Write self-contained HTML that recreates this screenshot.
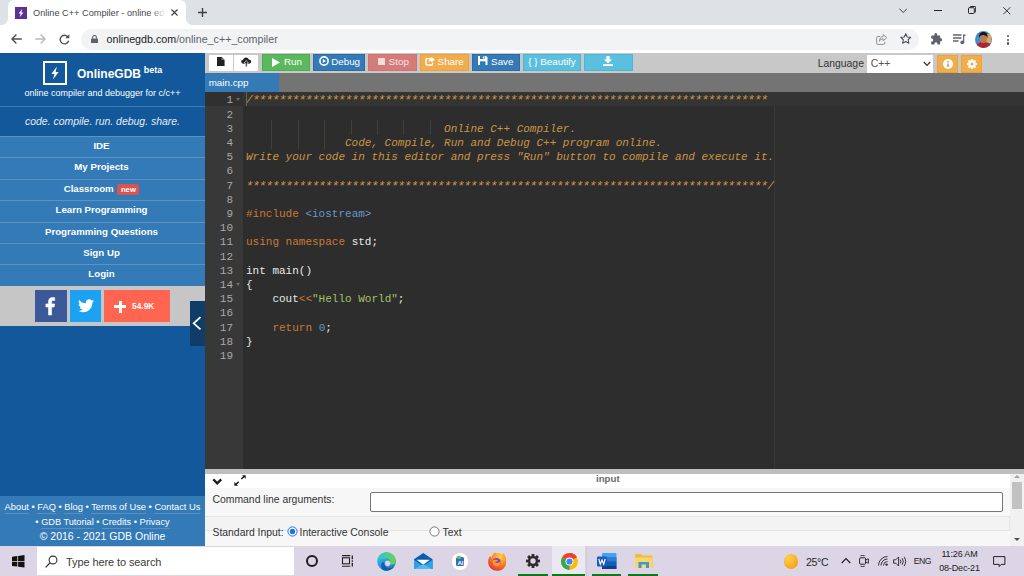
<!DOCTYPE html>
<html>
<head>
<meta charset="utf-8">
<title>Online C++ Compiler</title>
<style>
*{box-sizing:border-box;margin:0;padding:0}
html,body{width:1024px;height:576px;overflow:hidden;background:#fff;font-family:"Liberation Sans",sans-serif;}
.abs{position:absolute}
#root{position:relative;width:1024px;height:576px;overflow:hidden}
/* browser chrome */
#tabstrip{left:0;top:0;width:1024px;height:25px;background:#dee1e6}
#tab{left:7.500px;top:0;width:178.500px;height:25px;background:#fff;border-radius:6px 6px 0 0}
#tabtitle{left:33px;top:6.500px;font-size:9.200px;line-height:12px;color:#45494d;white-space:nowrap;width:133px;overflow:hidden}
#addr{left:0;top:25px;width:1024px;height:27.700px;background:#fff}
#pill{left:81px;top:28.500px;width:838px;height:21px;border-radius:10.500px;background:#f1f3f4}
#url{left:106.600px;top:32px;font-size:10.700px;line-height:14px;color:#5f6368;white-space:nowrap}
#url b{font-weight:normal;color:#202124}
/* sidebar */
#side{left:0;top:52.700px;width:205px;height:493.300px;background:#12589a}
.menu{left:0;width:205px;height:21.4px;background:#337ab7;border-top:1px solid #5a93c6;color:#fff;font-weight:bold;font-size:9.700px;text-align:center;line-height:18.600px;padding-right:2px}
/* toolbar */
#toolbar{left:205px;top:53px;width:819px;height:20.400px;background:#c8c8c8}
.btn{top:54px;height:17px;color:#fff;font-size:10.5px;line-height:17px;text-align:center;white-space:nowrap}
#tabs{left:205px;top:73.400px;width:819px;height:18.600px;background:#747474}
#ftab{left:205px;top:73.400px;width:74px;height:18.600px;background:#337ab7;color:#fff;font-size:9.800px;line-height:19px;padding-left:3.700px}
/* editor */
#editor{left:205px;top:92px;width:819px;height:377px;background:#2d2d2d}
#gutter{left:205px;top:92px;width:38px;height:377px;background:#383838}
.ln{left:205px;width:28px;text-align:right;color:#a9a9a9;font-family:"Liberation Mono",monospace;font-size:11px;line-height:14px;height:14px}
.cl{left:246px;color:#e8e8e8;font-family:"Liberation Mono",monospace;font-size:11px;line-height:14px;height:14px;white-space:pre}
.cm{color:#cc9544;font-style:italic}
.stars{font-size:13px;letter-spacing:-1.200px;position:relative;top:1.200px;margin-left:-0.600px;margin-right:0.600px;line-height:10px}
.kw{color:#cc7832}
.st{color:#a5c261}
.nu{color:#6897bb}
.inc{color:#6a96c8}
/* bottom panel */
#split{left:205px;top:468.500px;width:819px;height:5.400px;background:#bebebe}
#panel{left:205px;top:473.800px;width:819px;height:72.200px;background:#fff}
/* taskbar */
#taskbar{left:0;top:545.700px;width:1024px;height:30.300px;background:#dcd5e5}
</style>
</head>
<body>
<div id="root">
<!-- BROWSER CHROME -->
<div id="tabstrip" class="abs"></div>
<div id="tab" class="abs"></div>
<div id="tabtitle" class="abs">Online C++ Compiler - online ed</div>
<div id="addr" class="abs"></div>
<div id="pill" class="abs"></div>
<div id="url" class="abs"><b>onlinegdb.com</b>/online_c++_compiler</div>
<!-- CHROME-ICONS -->
<div class="abs" style="left:15px;top:7px;width:12px;height:11.800px;background:#5b3191"></div>
<svg class="abs" style="left:15px;top:7px" width="12" height="12" viewBox="0 0 12 12"><path d="M7.300 1.800 L3.600 6.600 L5.700 6.600 L4.700 10.200 L8.400 5.400 L6.300 5.400 Z" fill="#fff"/></svg>
<div class="abs" style="left:150px;top:4px;width:16px;height:18px;background:linear-gradient(to right,rgba(255,255,255,0),#fff)"></div>
<svg class="abs" style="left:170.500px;top:9.300px" width="7" height="7" viewBox="0 0 7 7"><path d="M0.500 0.500 L6.500 6.500 M6.500 0.500 L0.500 6.500" stroke="#3c4043" stroke-width="1.200"/></svg>
<svg class="abs" style="left:197.900px;top:8.200px" width="9" height="9" viewBox="0 0 9 9"><path d="M4.500 0 V9 M0 4.500 H9" stroke="#3c4043" stroke-width="1.400"/></svg>
<div class="abs" style="left:2px;top:19px;width:6px;height:6px;background:radial-gradient(circle at 0 0,#dee1e6 5.500px,#fff 6px)"></div>
<div class="abs" style="left:186px;top:19px;width:6px;height:6px;background:radial-gradient(circle at 100% 0,#dee1e6 5.500px,#fff 6px)"></div>
<svg class="abs" style="left:11px;top:34px" width="11" height="10" viewBox="0 0 11 10"><path d="M10.800 5 H1.400 M5.400 0.600 L1 5 L5.400 9.400" fill="none" stroke="#4d5156" stroke-width="1.400"/></svg>
<svg class="abs" style="left:35.300px;top:34px" width="11" height="10" viewBox="0 0 11 10"><path d="M0.200 5 H9.600 M5.600 0.600 L10 5 L5.600 9.400" fill="none" stroke="#b9bbbe" stroke-width="1.400"/></svg>
<svg class="abs" style="left:59px;top:34px" width="11" height="10.500" viewBox="0 0 11 10.500"><path d="M9.300 3.600 A4.300 4.300 0 1 0 9.600 6.800" fill="none" stroke="#4d5156" stroke-width="1.400"/><path d="M10.300 0.300 V4.300 H6.300 Z" fill="#4d5156"/></svg>
<svg class="abs" style="left:91.200px;top:34.500px" width="7" height="8.500" viewBox="0 0 7 8.500"><rect x="0" y="3.400" width="7" height="5.100" rx="0.700" fill="#5f6368"/><path d="M1.600 3.800 V2.400 A1.900 1.900 0 0 1 5.400 2.400 V3.800" fill="none" stroke="#5f6368" stroke-width="1.100"/></svg>
<svg class="abs" style="left:899px;top:8px" width="8.400" height="5.400" viewBox="0 0 8.400 5.400"><path d="M0.400 0.600 L4.200 4.600 L8 0.600" fill="none" stroke="#333" stroke-width="0.900"/></svg>
<div class="abs" style="left:934px;top:10.200px;width:7.800px;height:1px;background:#222"></div>
<svg class="abs" style="left:968.200px;top:6.300px" width="8.200" height="8" viewBox="0 0 8.200 8"><rect x="0.500" y="1.700" width="5.800" height="5.800" rx="0.800" fill="none" stroke="#222" stroke-width="1"/><path d="M1.900 1.700 V1.300 Q1.900 0.500 2.700 0.500 H6.900 Q7.700 0.500 7.700 1.300 V5.500 Q7.700 6.300 6.900 6.300 H6.500" fill="none" stroke="#222" stroke-width="1"/></svg>
<svg class="abs" style="left:1003px;top:7px" width="7.600" height="7.600" viewBox="0 0 7.600 7.600"><path d="M0.300 0.300 L7.300 7.300 M7.300 0.300 L0.300 7.300" stroke="#222" stroke-width="0.900"/></svg>
<svg class="abs" style="left:875.500px;top:33.500px" width="11.500" height="11" viewBox="0 0 11.500 11"><path d="M4.200 2.500 H1.800 Q0.600 2.500 0.600 3.700 V9.200 Q0.600 10.400 1.800 10.400 H7.600 Q8.800 10.400 8.800 9.200 V7.800" fill="none" stroke="#8e9195" stroke-width="1"/><path d="M7.200 0.600 L10.800 3.700 L7.200 6.800 V4.900 C5.200 4.900 4 5.700 3.400 7.400 C3.400 4.500 4.800 2.700 7.200 2.500 Z" fill="none" stroke="#8e9195" stroke-width="1" stroke-linejoin="round"/></svg>
<svg class="abs" style="left:900px;top:33.300px" width="11.500" height="11" viewBox="0 0 11.500 11"><path d="M5.750 0.800 L7.250 4 L10.700 4.400 L8.150 6.750 L8.850 10.200 L5.750 8.450 L2.650 10.200 L3.350 6.750 L0.800 4.400 L4.250 4 Z" fill="none" stroke="#4d5156" stroke-width="1.100" stroke-linejoin="round"/></svg>
<svg class="abs" style="left:929.500px;top:33px" width="12" height="12" viewBox="0 0 12 12"><path d="M4.300 1.600 A1.500 1.500 0 0 1 7.300 1.600 V2.400 H9.600 Q10.200 2.400 10.200 3 V5.300 H10.800 A1.500 1.500 0 0 1 10.800 8.300 H10.200 V10.800 Q10.200 11.400 9.600 11.400 H7.400 V10.700 A1.500 1.500 0 0 0 4.400 10.700 V11.400 H1.800 Q1.200 11.400 1.200 10.800 V8.400 H1.700 A1.500 1.500 0 0 0 1.700 5.400 H1.200 V3 Q1.200 2.400 1.800 2.400 H4.300 Z" fill="#5f6368"/></svg>
<svg class="abs" style="left:953px;top:34px" width="12.500" height="10.500" viewBox="0 0 12.500 10.500"><path d="M0 1 H8.500 M0 4 H8.500 M0 7 H5.500" stroke="#5f6368" stroke-width="1.300"/><path d="M10.700 0.600 V8" stroke="#5f6368" stroke-width="1.200"/><path d="M10.700 0.600 H12.500 V2 H10.700" fill="#5f6368"/><circle cx="9.300" cy="8.300" r="1.900" fill="#5f6368"/></svg>
<svg class="abs" style="left:975px;top:30.500px" width="17" height="17" viewBox="0 0 17 17"><defs><clipPath id="avc"><circle cx="8.500" cy="8.500" r="8.500"/></clipPath></defs><g clip-path="url(#avc)"><rect width="17" height="17" fill="#3e8fd0"/><rect x="11" y="3" width="5" height="9" fill="#d9a85a"/><ellipse cx="8.500" cy="16" rx="8" ry="5" fill="#b8222d"/><ellipse cx="8.300" cy="7.800" rx="3.600" ry="4.300" fill="#b87b5a"/><path d="M4 7 C3.500 2.500 6 1 8.500 1 C11.500 1 13 3 12.500 7 C11.500 4.500 9.500 3.800 8 4 C6 4.200 4.800 5 4 7 Z" fill="#1e1614"/></g></svg>
<div class="abs" style="left:1006.700px;top:35px;width:2.200px;height:2.200px;border-radius:50%;background:#4d5156"></div>
<div class="abs" style="left:1006.700px;top:38.7px;width:2.200px;height:2.200px;border-radius:50%;background:#4d5156"></div>
<div class="abs" style="left:1006.700px;top:42.4px;width:2.200px;height:2.200px;border-radius:50%;background:#4d5156"></div>
<!-- /CHROME-ICONS -->

<!-- SIDEBAR -->
<div id="side" class="abs"></div>
<!-- SIDEBAR-CONTENT -->
<div class="abs" style="left:43px;top:61px;width:24px;height:24px;border:2px solid #fff"></div>
<svg class="abs" style="left:43px;top:61px" width="24" height="24" viewBox="0 0 24 24"><path d="M13.900 5.500 L8.300 12.900 L11.400 12.900 L10 18.500 L15.700 11 L12.600 11 Z" fill="#fff"/></svg>
<div class="abs" style="left:77px;top:67px;font-size:12px;font-weight:bold;color:#fff;white-space:nowrap">OnlineGDB</div>
<div class="abs" style="left:143.800px;top:65px;font-size:9px;font-weight:bold;color:#fff;white-space:nowrap">beta</div>
<div class="abs" style="left:0;top:88px;width:205px;text-align:center;font-size:9px;color:#fff;white-space:nowrap">online compiler and debugger for c/c++</div>
<div class="abs" style="left:0;top:106px;width:205px;height:1px;background:#3f7ab3"></div>
<div class="abs" style="left:0;top:116.200px;width:205px;text-align:center;font-size:10.450px;font-style:italic;color:#e4ecf5;white-space:nowrap">code. compile. run. debug. share.</div>
<div class="abs menu" style="top:136.0px">IDE</div>
<div class="abs menu" style="top:157.4px">My Projects</div>
<div class="abs menu" style="top:178.8px">Classroom <span style="display:inline-block;background:#d9534f;color:#fff;font-size:7.700px;line-height:11px;height:11.700px;padding:0 3.500px;border-radius:2px;vertical-align:0px;margin-left:1px">new</span></div>
<div class="abs menu" style="top:200.2px">Learn Programming</div>
<div class="abs menu" style="top:221.6px">Programming Questions</div>
<div class="abs menu" style="top:243.0px">Sign Up</div>
<div class="abs menu" style="top:264.4px">Login</div>
<div class="abs" style="left:0;top:286px;width:205px;height:40px;background:#c6c6c6"></div>
<div class="abs" style="left:35px;top:290px;width:32px;height:32px;background:#3b5998"></div>
<svg class="abs" style="left:34.300px;top:290px" width="32" height="32" viewBox="0 0 32 32"><path stroke="#fff" stroke-width="0.600" d="M17.6 25 V17 H20.2 L20.6 13.9 H17.6 V12 C17.6 11.1 17.9 10.5 19.1 10.5 H20.7 V7.7 C20.4 7.7 19.5 7.6 18.4 7.6 C16.1 7.6 14.5 9 14.5 11.6 V13.9 H11.9 V17 H14.5 V25 Z" fill="#fff"/></svg>
<div class="abs" style="left:70px;top:290px;width:31px;height:32px;background:#1da1f2"></div>
<svg class="abs" style="left:78px;top:299px" width="16" height="14" viewBox="0 0 24 20"><path d="M24 2.4c-.9.4-1.800.7-2.800.8 1-.6 1.800-1.600 2.200-2.700-1 .6-2 1-3.100 1.200C19.400.7 18.100 0 16.600 0c-2.700 0-4.900 2.200-4.900 4.900 0 .4 0 .8.100 1.100C7.700 5.800 4.100 3.900 1.700.9 1.200 1.700 1 2.500 1 3.400c0 1.700.9 3.200 2.200 4.100-.8 0-1.600-.2-2.200-.6v.1c0 2.400 1.700 4.400 3.900 4.800-.4.100-.8.200-1.300.2-.3 0-.6 0-.9-.1.600 2 2.400 3.400 4.600 3.400-1.700 1.300-3.800 2.100-6.100 2.100-.4 0-.8 0-1.200-.1 2.200 1.400 4.800 2.200 7.500 2.200 9.100 0 14-7.500 14-14v-.6c1-.7 1.800-1.600 2.500-2.500z" fill="#fff"/></svg>
<div class="abs" style="left:104px;top:290px;width:66px;height:32px;background:#ff6550"></div>
<div class="abs" style="left:114px;top:305px;width:12px;height:3px;background:#fff"></div>
<div class="abs" style="left:118.5px;top:300.5px;width:3px;height:12px;background:#fff"></div>
<div class="abs" style="left:132px;top:301px;font-size:8.400px;font-weight:bold;color:#fff">54.9K</div>
<div class="abs" style="left:190px;top:301px;width:15px;height:44.500px;background:#103d68"></div>
<svg class="abs" style="left:190px;top:314px" width="15" height="18" viewBox="0 0 15 18"><path d="M10.500 3.200 L3.700 9.300 L10.500 15.400" fill="none" stroke="#fff" stroke-width="1.800"/></svg>
<div class="abs" style="left:0;top:496px;width:205px;height:50px;background:#337ab7"></div>
<div class="abs" style="left:0;top:500.800px;width:205px;text-align:center;font-size:9.300px;color:#fff;white-space:nowrap;line-height:12px"><span style="border-bottom:1px solid #558fc4;padding-bottom:1px">About</span> • <span style="border-bottom:1px solid #558fc4;padding-bottom:1px">FAQ</span> • <span style="border-bottom:1px solid #558fc4;padding-bottom:1px">Blog</span> • <span style="border-bottom:1px solid #558fc4;padding-bottom:1px">Terms of Use</span> • <span style="border-bottom:1px solid #558fc4;padding-bottom:1px">Contact Us</span></div>
<div class="abs" style="left:0;top:515.5px;width:205px;text-align:center;font-size:9.2px;color:#fff;white-space:nowrap;line-height:12px">• <span style="border-bottom:1px solid #558fc4;padding-bottom:1px">GDB Tutorial</span> • <span style="border-bottom:1px solid #558fc4;padding-bottom:1px">Credits</span> • <span style="border-bottom:1px solid #558fc4;padding-bottom:1px">Privacy</span></div>
<div class="abs" style="left:0;top:529px;width:205px;text-align:center;font-size:10.500px;color:#fff;white-space:nowrap;line-height:14px">© 2016 - 2021 GDB Online</div>
<!-- /SIDEBAR-CONTENT -->

<!-- TOOLBAR -->
<div id="toolbar" class="abs"></div>
<!-- TOOLBAR-CONTENT -->
<div class="abs" style="left:209px;top:55px;width:24px;height:16px;background:#fff"></div>
<div class="abs" style="left:234px;top:55px;width:24px;height:16px;background:#fff"></div>
<svg class="abs" style="left:217.200px;top:56.500px" width="7.600" height="9.300" viewBox="0 0 9 11"><path d="M0 0 H5.5 L9 3.5 V11 H0 Z" fill="#222"/><path d="M5.5 0 V3.5 H9" fill="#777"/></svg>
<svg class="abs" style="left:241px;top:57px" width="10.500" height="10" viewBox="0 0 12 11"><path d="M3 7.500 C1.300 7.500 0.300 6.500 0.300 5.200 C0.300 4 1.200 3.100 2.400 3 C2.700 1.500 4 0.300 5.700 0.300 C7.200 0.300 8.400 1.200 8.900 2.500 C10.500 2.500 11.700 3.600 11.700 5 C11.700 6.400 10.600 7.500 9.200 7.500 Z" fill="#222"/><path d="M6 3.800 L8.600 6.800 H7 V10.800 H5 V6.800 H3.400 Z" fill="#222" stroke="#fff" stroke-width="0.7"/></svg>
<div class="abs" style="left:261.5px;top:54px;width:48.8px;height:17px;background:#5cb85c;border:1px solid #4cae4c"></div>
<svg class="abs" style="left:272px;top:58px" width="8" height="9" viewBox="0 0 8 9"><path d="M0 0 L8 4.500 L0 9 Z" fill="#fff"/></svg><div class="abs" style="left:284px;top:53px;height:17px;line-height:17px;font-size:9.8px;color:#fff;white-space:nowrap">Run</div>
<div class="abs" style="left:313.2px;top:54px;width:52px;height:17px;background:#337ab7;border:1px solid #2e6da4"></div>
<svg class="abs" style="left:318.500px;top:56.300px" width="10" height="10" viewBox="0 0 10 10"><circle cx="5" cy="5" r="4.100" fill="none" stroke="#fff" stroke-width="1.600"/><path d="M3.800 2.900 L7 5 L3.800 7.100 Z" fill="#fff"/></svg><div class="abs" style="left:331.2px;top:53px;height:17px;line-height:17px;font-size:9.8px;color:#fff;white-space:nowrap">Debug</div>
<div class="abs" style="left:368px;top:54px;width:49px;height:17px;background:#d57b7a;border:1px solid #cf7271"></div>
<div class="abs" style="left:377.500px;top:58px;width:7.500px;height:7px;background:#f3dede"></div><div class="abs" style="left:388.7px;top:53px;height:17px;line-height:17px;font-size:9.8px;color:#f7e6e6;white-space:nowrap">Stop</div>
<div class="abs" style="left:419.8px;top:54px;width:48.8px;height:17px;background:#f0ad4e;border:1px solid #eea236"></div>
<svg class="abs" style="left:424.800px;top:56.800px" width="10" height="9" viewBox="0 0 10 9"><path d="M6.200 1.600 H2 Q1 1.600 1 2.600 V7 Q1 8 2 8 H6.600 Q7.600 8 7.600 7 V5.800" fill="none" stroke="#fff" stroke-width="1.400"/><path d="M6.300 0 L10 2.800 L6.300 5.600 V3.800 C4.800 3.800 3.900 4.500 3.500 5.800 C3.400 3.400 4.500 1.900 6.300 1.800 Z" fill="#fff"/></svg><div class="abs" style="left:437.6px;top:53px;height:17px;line-height:17px;font-size:9.8px;color:#fff;white-space:nowrap">Share</div>
<div class="abs" style="left:471.8px;top:54px;width:48.4px;height:17px;background:#337ab7;border:1px solid #2e6da4"></div>
<svg class="abs" style="left:478.200px;top:56.200px" width="9.500" height="9" viewBox="0 0 9.500 9"><path d="M0 0 H8 L9.500 1.500 V9 H0 Z" fill="#fff"/><rect x="2" y="0" width="4.600" height="3" fill="#337ab7"/><rect x="4.800" y="0.500" width="1.200" height="2" fill="#fff"/><rect x="2" y="5.300" width="5.500" height="3.700" fill="#337ab7"/></svg><div class="abs" style="left:491.1px;top:53px;height:17px;line-height:17px;font-size:9.8px;color:#fff;white-space:nowrap">Save</div>
<div class="abs" style="left:523.1px;top:54px;width:57.9px;height:17px;background:#5bc0de;border:1px solid #46b8da"></div>
<div class="abs" style="left:528.3px;top:53px;height:17px;line-height:17px;font-size:9.8px;color:#fff;white-space:nowrap">{ } Beautify</div>
<div class="abs" style="left:584.1px;top:54px;width:48.8px;height:17px;background:#5bc0de;border:1px solid #46b8da"></div>
<svg class="abs" style="left:603px;top:56.200px" width="10" height="10" viewBox="0 0 10 10"><path d="M3.400 0 H6.600 V3.600 H9 L5 7.600 L1 3.600 H3.400 Z" fill="#fff"/><rect x="0" y="8.200" width="10" height="1.800" fill="#fff"/></svg>
<div class="abs" style="left:817.700px;top:55px;height:18px;line-height:18px;font-size:10.400px;color:#333;white-space:nowrap">Language</div>
<div class="abs" style="left:867px;top:54.700px;width:66.300px;height:18.200px;background:#fff"></div>
<div class="abs" style="left:870.800px;top:55px;height:18px;line-height:18px;font-size:10.400px;color:#555;white-space:nowrap">C++</div>
<svg class="abs" style="left:922.500px;top:61px" width="8" height="6" viewBox="0 0 8 6"><path d="M0.800 1 L4 4.400 L7.200 1" fill="none" stroke="#333" stroke-width="1.300"/></svg>
<div class="abs" style="left:937px;top:55.200px;width:21px;height:18.200px;background:#f0ad4e;border:1px solid #eea236"></div>
<svg class="abs" style="left:942.700px;top:58.700px" width="10" height="10" viewBox="0 0 10 10"><circle cx="5" cy="5" r="5" fill="#fff"/><circle cx="5" cy="2.800" r="1" fill="#f0ad4e"/><rect x="4" y="4.500" width="2" height="3.500" fill="#f0ad4e"/></svg>
<div class="abs" style="left:961.200px;top:55.200px;width:21px;height:18.200px;background:#f0ad4e;border:1px solid #eea236"></div>
<svg class="abs" style="left:966.500px;top:58.700px" width="10" height="10" viewBox="0 0 10 10"><rect x="4.100" y="0" width="1.800" height="10" fill="#fff" transform="rotate(0 5 5)"/><rect x="4.100" y="0" width="1.800" height="10" fill="#fff" transform="rotate(45 5 5)"/><rect x="4.100" y="0" width="1.800" height="10" fill="#fff" transform="rotate(90 5 5)"/><rect x="4.100" y="0" width="1.800" height="10" fill="#fff" transform="rotate(135 5 5)"/><circle cx="5" cy="5" r="3.700" fill="#fff"/><circle cx="5" cy="5" r="1.600" fill="#f0ad4e"/></svg>
<!-- /TOOLBAR-CONTENT -->
<div id="tabs" class="abs"></div>
<div id="ftab" class="abs">main.cpp</div>

<!-- EDITOR -->
<div id="editor" class="abs"></div>
<div id="gutter" class="abs"></div>
<!-- EDITOR-CONTENT -->
<div class="abs" style="left:774px;top:92px;width:250px;height:376.500px;background:#2f2f2f;border-left:1px solid #383838"></div>
<div class="abs" style="left:205px;top:92px;width:38px;height:14.3px;background:#303030"></div>
<div class="abs" style="left:243px;top:92px;width:781px;height:14.3px;background:#343434"></div>
<div class="abs ln" style="top:93.30px">1</div>
<div class="abs cl" style="top:93.30px"><span class="cm">/<span class="stars">******************************************************************************</span></span></div>
<div class="abs ln" style="top:107.51px">2</div>
<div class="abs ln" style="top:121.72px">3</div>
<div class="abs cl" style="top:121.72px"><span class="cm">                              Online C++ Compiler.</span></div>
<div class="abs ln" style="top:135.93px">4</div>
<div class="abs cl" style="top:135.93px"><span class="cm">               Code, Compile, Run and Debug C++ program online.</span></div>
<div class="abs ln" style="top:150.14px">5</div>
<div class="abs cl" style="top:150.14px"><span class="cm">Write your code in this editor and press "Run" button to compile and execute it.</span></div>
<div class="abs ln" style="top:164.35px">6</div>
<div class="abs ln" style="top:178.56px">7</div>
<div class="abs cl" style="top:178.56px"><span class="cm"><span class="stars">*******************************************************************************</span>/</span></div>
<div class="abs ln" style="top:192.77px">8</div>
<div class="abs ln" style="top:206.98px">9</div>
<div class="abs cl" style="top:206.98px"><span class="kw">#include </span><span class="inc">&lt;iostream&gt;</span></div>
<div class="abs ln" style="top:221.19px">10</div>
<div class="abs ln" style="top:235.40px">11</div>
<div class="abs cl" style="top:235.40px"><span class="kw">using namespace</span> std;</div>
<div class="abs ln" style="top:249.61px">12</div>
<div class="abs ln" style="top:263.82px">13</div>
<div class="abs cl" style="top:263.82px">int main()</div>
<div class="abs ln" style="top:278.03px">14</div>
<div class="abs cl" style="top:278.03px">{</div>
<div class="abs ln" style="top:292.24px">15</div>
<div class="abs cl" style="top:292.24px">    cout<span class="kw">&lt;&lt;</span><span class="st">"Hello World"</span>;</div>
<div class="abs ln" style="top:306.45px">16</div>
<div class="abs ln" style="top:320.66px">17</div>
<div class="abs cl" style="top:320.66px">    <span class="kw">return</span> <span class="nu">0</span>;</div>
<div class="abs ln" style="top:334.87px">18</div>
<div class="abs cl" style="top:334.87px">}</div>
<div class="abs ln" style="top:349.08px">19</div>
<div class="abs" style="left:271.4px;top:120.4px;width:1px;height:28.4px;background:#414138"></div>
<div class="abs" style="left:297.8px;top:120.4px;width:1px;height:28.4px;background:#414138"></div>
<div class="abs" style="left:324.2px;top:120.4px;width:1px;height:28.4px;background:#414138"></div>
<div class="abs" style="left:350.6px;top:120.4px;width:1px;height:14.2px;background:#414138"></div>
<div class="abs" style="left:377.0px;top:120.4px;width:1px;height:14.2px;background:#414138"></div>
<div class="abs" style="left:403.4px;top:120.4px;width:1px;height:14.2px;background:#414138"></div>
<div class="abs" style="left:429.8px;top:120.4px;width:1px;height:14.2px;background:#414138"></div>
<div class="abs" style="left:236px;top:98.0px;width:0;height:0;border-left:2.5px solid transparent;border-right:2.5px solid transparent;border-top:3px solid #6e6e6e"></div>
<div class="abs" style="left:236px;top:282.7px;width:0;height:0;border-left:2.5px solid transparent;border-right:2.5px solid transparent;border-top:3px solid #6e6e6e"></div>
<div class="abs" style="left:246px;top:92px;width:1px;height:14.3px;background:#55703a"></div>
<!-- /EDITOR-CONTENT -->

<!-- PANEL -->
<div id="split" class="abs"></div>
<div id="panel" class="abs"></div>
<!-- PANEL-CONTENT -->
<div class="abs" style="left:205px;top:488px;width:805px;height:58px;background:#f7f7f7"></div>
<div class="abs" style="left:205px;top:516px;width:805px;height:14.500px;background:#f3f3f3;border:1px solid #e4e4e4;border-left:none"></div>
<svg class="abs" style="left:212px;top:477.600px" width="10.500" height="7.500" viewBox="0 0 10.500 7.500"><path d="M1.300 1.400 L5.250 5.300 L9.200 1.400" fill="none" stroke="#1a1a1a" stroke-width="2.300"/></svg>
<svg class="abs" style="left:234.300px;top:475.200px" width="12" height="11" viewBox="0 0 12 11"><path d="M7.300 4 L10.300 1.300" stroke="#1a1a1a" stroke-width="1.500" fill="none"/><path d="M8 0.300 H11.700 V3.800 Z" fill="#1a1a1a"/><path d="M4.700 6.800 L1.700 9.600" stroke="#1a1a1a" stroke-width="1.500" fill="none"/><path d="M0.300 7.100 V10.700 H4 Z" fill="#1a1a1a"/></svg>
<div class="abs" style="left:596px;top:473px;font-size:9.700px;font-weight:bold;color:#6a6a6a;line-height:12px">input</div>
<div class="abs" style="left:212.500px;top:493px;font-size:10.400px;color:#333;line-height:13px;white-space:nowrap">Command line arguments:</div>
<div class="abs" style="left:370px;top:492px;width:633px;height:19.700px;background:#fff;border:1px solid #767676;border-radius:2px"></div>
<div class="abs" style="left:212.500px;top:525.500px;font-size:10.400px;color:#333;line-height:13px;white-space:nowrap">Standard Input:</div>
<svg class="abs" style="left:286.500px;top:526px" width="11" height="11" viewBox="0 0 11 11"><circle cx="5.500" cy="5.500" r="4.600" fill="#fff" stroke="#1a73e8" stroke-width="1"/><circle cx="5.500" cy="5.500" r="2.700" fill="#1a73e8"/></svg>
<div class="abs" style="left:299.500px;top:525.500px;font-size:10.400px;color:#333;line-height:13px;white-space:nowrap">Interactive Console</div>
<svg class="abs" style="left:428.700px;top:526px" width="11" height="11" viewBox="0 0 11 11"><circle cx="5.500" cy="5.500" r="4.600" fill="#fff" stroke="#767676" stroke-width="1"/></svg>
<div class="abs" style="left:442.500px;top:525.500px;font-size:10.400px;color:#333;line-height:13px;white-space:nowrap">Text</div>
<div class="abs" style="left:1010px;top:473.500px;width:14px;height:72.500px;background:#f1f1f1"></div>
<div class="abs" style="left:1012.400px;top:482.300px;width:9.300px;height:27px;background:#c1c1c1"></div>
<div class="abs" style="left:1013.500px;top:475px;width:0;height:0;border-left:3.500px solid transparent;border-right:3.500px solid transparent;border-bottom:3.500px solid #a3a3a3"></div>
<div class="abs" style="left:1013.500px;top:537.500px;width:0;height:0;border-left:3.500px solid transparent;border-right:3.500px solid transparent;border-top:3.500px solid #505050"></div>
<!-- /PANEL-CONTENT -->

<!-- TASKBAR -->
<div id="taskbar" class="abs"></div>
<!-- TASKBAR-CONTENT -->
<svg class="abs" style="left:12px;top:555px" width="12.500" height="12.500" viewBox="0 0 12.500 12.500"><path d="M0 1.700 L5.300 1 V5.900 H0 Z M6.100 0.900 L12.500 0 V5.900 H6.100 Z M0 6.700 H5.300 V11.600 L0 10.900 Z M6.100 6.700 H12.500 V12.500 L6.100 11.700 Z" fill="#111"/></svg>
<div class="abs" style="left:37px;top:546.500px;width:256.500px;height:28.500px;background:#fff"></div>
<svg class="abs" style="left:45px;top:555px" width="13" height="13" viewBox="0 0 13 13"><circle cx="8" cy="5" r="3.900" fill="none" stroke="#333" stroke-width="1.100"/><path d="M5.200 7.800 L0.600 12.400" stroke="#333" stroke-width="1.300"/></svg>
<div class="abs" style="left:66px;top:554.500px;font-size:11px;letter-spacing:-0.100px;color:#3b3b3b;line-height:14px;white-space:nowrap">Type here to search</div>
<div class="abs" style="left:305.500px;top:555.300px;width:12px;height:12px;border:2px solid #1b1b1b;border-radius:50%"></div>
<svg class="abs" style="left:341px;top:555px" width="14" height="12" viewBox="0 0 14 12"><rect x="1.500" y="2.800" width="7" height="6" fill="none" stroke="#222" stroke-width="1.100"/><path d="M1 0.600 H9.200 M1 11.200 H9.200" stroke="#222" stroke-width="1.100"/><path d="M11.300 0.500 V4.200 M11.300 5.200 V6.700 M11.300 7.700 V11.500" stroke="#222" stroke-width="1.300"/></svg>
<svg class="abs" style="left:376.500px;top:552px" width="19" height="19" viewBox="0 0 19 19"><defs><linearGradient id="eg1" x1="0" y1="0" x2="1" y2="1"><stop offset="0" stop-color="#35c1f1"/><stop offset="1" stop-color="#1b6fc2"/></linearGradient><linearGradient id="eg2" x1="0" y1="0" x2="1" y2="0"><stop offset="0" stop-color="#2bc4d8"/><stop offset="1" stop-color="#6bd34a"/></linearGradient></defs><circle cx="9.500" cy="9.500" r="9.300" fill="url(#eg1)"/><path d="M0.500 8 C1.500 3 5.500 0.200 9.500 0.200 C14.500 0.200 18.800 4 18.800 8.500 C18.800 11.500 16.500 12.800 14.500 12.800 C12.500 12.800 12 11.800 12.800 10.500 C13.500 9 12.500 6.500 9.500 6.500 C5.500 6.500 2.500 7.500 0.500 8 Z" fill="url(#eg2)"/><path d="M7 10.500 C7 13.500 9.500 16.300 13.500 16 C15 15.800 16.500 15 17.300 14.200 C15 18 10.500 19.600 6.500 18.200 C3.500 16.500 3.300 12.500 5.500 10.200 Z" fill="#155fae"/><ellipse cx="10.600" cy="11.300" rx="2.600" ry="2.900" fill="#dcd5e5"/></svg>
<svg class="abs" style="left:414px;top:552.500px" width="18.500" height="16.500" viewBox="0 0 18.500 16.500"><path d="M0 6.200 L9.250 0 L18.500 6.200 V16.500 H0 Z" fill="#0b5cad"/><path d="M2.600 6.800 H15.900 L9.250 11.800 Z" fill="#fff"/><path d="M0 6.800 L9.250 13 L18.500 6.800 V16.500 H0 Z" fill="#2fa0ea"/><path d="M0 16.500 L9.250 11 L18.500 16.500 Z" fill="#55bbf6"/></svg>
<div class="abs" style="left:451.500px;top:553.300px;width:16.500px;height:16.500px;border-radius:50%;background:#fff"></div>
<div class="abs" style="left:456px;top:557px;width:8px;height:9px;background:#2f6fb6;border-radius:1.500px"></div>
<div class="abs" style="left:457px;top:556px;width:4px;height:3px;background:#6cc04a;border-radius:1px"></div>
<div class="abs" style="left:457.500px;top:559.500px;font-size:6px;font-weight:bold;color:#fff;line-height:6px">AI</div>
<svg class="abs" style="left:487.500px;top:552px" width="18.500" height="19" viewBox="0 0 18.500 19"><defs><radialGradient id="ff1" cx="0.650" cy="0.250" r="0.900"><stop offset="0" stop-color="#ffd43a"/><stop offset="0.450" stop-color="#ff8a16"/><stop offset="1" stop-color="#e3163e"/></radialGradient></defs><path d="M9.250 1.500 C11 0.500 12.500 1.500 13.500 3 C14.500 2.500 15 1.800 15 1 C17.500 3.500 18.500 6.500 18.300 10 C18 15 14.500 18.800 9.250 18.800 C4 18.800 0.200 15 0.200 10 C0.200 7 1.200 5 2.500 3.800 C2.500 4.800 2.800 5.500 3.300 6 C3.800 3.500 5.500 1.200 7.500 0.200 C7.500 1.200 8 1.500 9.250 1.500 Z" fill="url(#ff1)"/><circle cx="8.600" cy="10.200" r="4.300" fill="#7a3fd6"/><path d="M4.500 8.500 C6.500 7.200 8.500 8.500 10.500 7.500 C9.500 9 8.500 10 6.500 10.500 C8.500 11.500 11.500 11 12.800 9 C13.300 12.500 10.500 15 7.500 14.300 C5.500 13.800 4 11.500 4.500 8.500 Z" fill="#ff9a1f"/></svg>
<svg class="abs" style="left:526px;top:554.300px" width="14" height="14" viewBox="0 0 14 14"><rect x="5.600" y="0" width="2.800" height="14" fill="#2d2d2d" transform="rotate(0 7 7)"/><rect x="5.600" y="0" width="2.800" height="14" fill="#2d2d2d" transform="rotate(45 7 7)"/><rect x="5.600" y="0" width="2.800" height="14" fill="#2d2d2d" transform="rotate(90 7 7)"/><rect x="5.600" y="0" width="2.800" height="14" fill="#2d2d2d" transform="rotate(135 7 7)"/><circle cx="7" cy="7" r="5.200" fill="#2d2d2d"/><circle cx="7" cy="7" r="2.700" fill="#dcd5e5"/></svg>
<div class="abs" style="left:552px;top:546px;width:33px;height:30px;background:#ece8f1"></div>
<div class="abs" style="left:585.500px;top:546px;width:1px;height:30px;background:#cfc8d8"></div>
<svg class="abs" style="left:561px;top:552.700px" width="17" height="17" viewBox="0 0 17 17"><circle cx="8.500" cy="8.500" r="8.500" fill="#fbbc05"/><path d="M8.500 8.500 L1.140 4.250 A8.500 8.500 0 0 1 15.860 4.250 Z" fill="#ea4335"/><path d="M8.500 8.500 L1.140 4.250 A8.500 8.500 0 0 0 8.500 17 Z" fill="#34a853"/><path d="M8.500 0 A8.500 8.500 0 0 1 15.860 4.250 L8.500 4.250 Z" fill="#ea4335"/><circle cx="8.500" cy="8.500" r="4" fill="#fff"/><circle cx="8.500" cy="8.500" r="3.100" fill="#4285f4"/></svg>
<svg class="abs" style="left:597px;top:552.500px" width="19.500" height="16.500" viewBox="0 0 19.500 16.500"><rect x="5" y="0" width="14.500" height="16.500" rx="1" fill="#41a5ee"/><rect x="5" y="4.100" width="14.500" height="4.100" fill="#2b7cd3"/><rect x="5" y="8.200" width="14.500" height="4.100" fill="#185abd"/><rect x="5" y="12.300" width="14.500" height="4.200" fill="#103f91"/><rect x="0" y="3.500" width="10" height="10" rx="1" fill="#185abd"/><path d="M1.800 5.800 L3.300 11.200 L5 7 L6.700 11.200 L8.200 5.800" fill="none" stroke="#fff" stroke-width="1.200"/></svg>
<svg class="abs" style="left:635px;top:553.500px" width="17.500" height="14.500" viewBox="0 0 17.500 14.500"><path d="M0 1 Q0 0 1 0 H6 L7.500 1.500 H16.500 Q17.500 1.500 17.500 2.500 V14 H0 Z" fill="#f5b93a"/><rect x="0" y="3.500" width="17.500" height="10.500" fill="#fcd667"/><path d="M3.500 14.500 V8 H14 V14.500 H11 V10.500 H6.500 V14.500 Z" fill="#3a96dd"/></svg>
<div class="abs" style="left:518px;top:574.300px;width:29.5px;height:2px;background:#12761a"></div>
<div class="abs" style="left:552px;top:574.300px;width:33px;height:2px;background:#12761a"></div>
<div class="abs" style="left:591.7px;top:574.300px;width:29.5px;height:2px;background:#12761a"></div>
<div class="abs" style="left:628px;top:574.300px;width:30px;height:2px;background:#12761a"></div>
<div class="abs" style="left:783.700px;top:554px;width:14.500px;height:14.500px;border-radius:50%;background:radial-gradient(circle at 35% 30%,#ffd24a,#f9a11b 75%,#f28c1a)"></div>
<div class="abs" style="left:806px;top:554.500px;font-size:10.600px;color:#2b2b2b;line-height:14px;letter-spacing:-0.350px;white-space:nowrap">25°C</div>
<svg class="abs" style="left:840.500px;top:557px" width="10" height="7" viewBox="0 0 10 7"><path d="M0.700 6 L5 1.500 L9.300 6" fill="none" stroke="#222" stroke-width="1.200"/></svg>
<svg class="abs" style="left:859px;top:555px" width="10" height="12" viewBox="0 0 10 12"><rect x="0.600" y="2.800" width="6" height="6.400" rx="1" fill="none" stroke="#222" stroke-width="1"/><path d="M6.600 5 L9.400 3.800 V8.200 L6.600 7" fill="none" stroke="#222" stroke-width="0.900"/><path d="M1.500 0.800 Q3.600 0 5.700 0.800 M1.500 11.200 Q3.600 12 5.700 11.200" fill="none" stroke="#222" stroke-width="0.900"/></svg>
<svg class="abs" style="left:878px;top:556px" width="10" height="10" viewBox="0 0 10 10"><path d="M0.500 9.500 A9 9 0 0 1 9.500 0.500" fill="none" stroke="#333" stroke-width="1"/><path d="M3 9.500 A6.500 6.500 0 0 1 9.500 3" fill="none" stroke="#333" stroke-width="1"/><path d="M5.500 9.500 A4 4 0 0 1 9.500 5.500" fill="none" stroke="#333" stroke-width="1"/><circle cx="8.600" cy="8.600" r="1.200" fill="#333"/></svg>
<svg class="abs" style="left:893px;top:555.500px" width="14" height="11" viewBox="0 0 14 11"><path d="M0.600 3.800 H2.800 L5.600 1 V10 L2.800 7.200 H0.600 Z" fill="none" stroke="#222" stroke-width="0.900"/><path d="M7.300 3.600 Q8.600 5.500 7.300 7.400 M9.200 2.200 Q11.400 5.500 9.200 8.800 M11.100 0.800 Q14.200 5.500 11.100 10.200" fill="none" stroke="#222" stroke-width="0.900"/></svg>
<div class="abs" style="left:913.700px;top:555px;font-size:8.600px;color:#222;line-height:12px;letter-spacing:-0.400px;white-space:nowrap">ENG</div>
<div class="abs" style="left:936px;top:548px;width:47px;text-align:center;font-size:9px;color:#222;line-height:12px;letter-spacing:-0.150px;white-space:nowrap">11:26 AM</div>
<div class="abs" style="left:936px;top:561.500px;width:47px;text-align:center;font-size:9px;color:#222;line-height:12px;letter-spacing:-0.150px;white-space:nowrap">08-Dec-21</div>
<svg class="abs" style="left:993px;top:555.500px" width="12.500" height="11.500" viewBox="0 0 12.500 11.500"><path d="M0.600 0.600 H11.900 V8.400 H8.200 L6.200 10.600 V8.400 H0.600 Z" fill="none" stroke="#222" stroke-width="1"/></svg>
<!-- /TASKBAR-CONTENT -->
</div>
</body>
</html>
